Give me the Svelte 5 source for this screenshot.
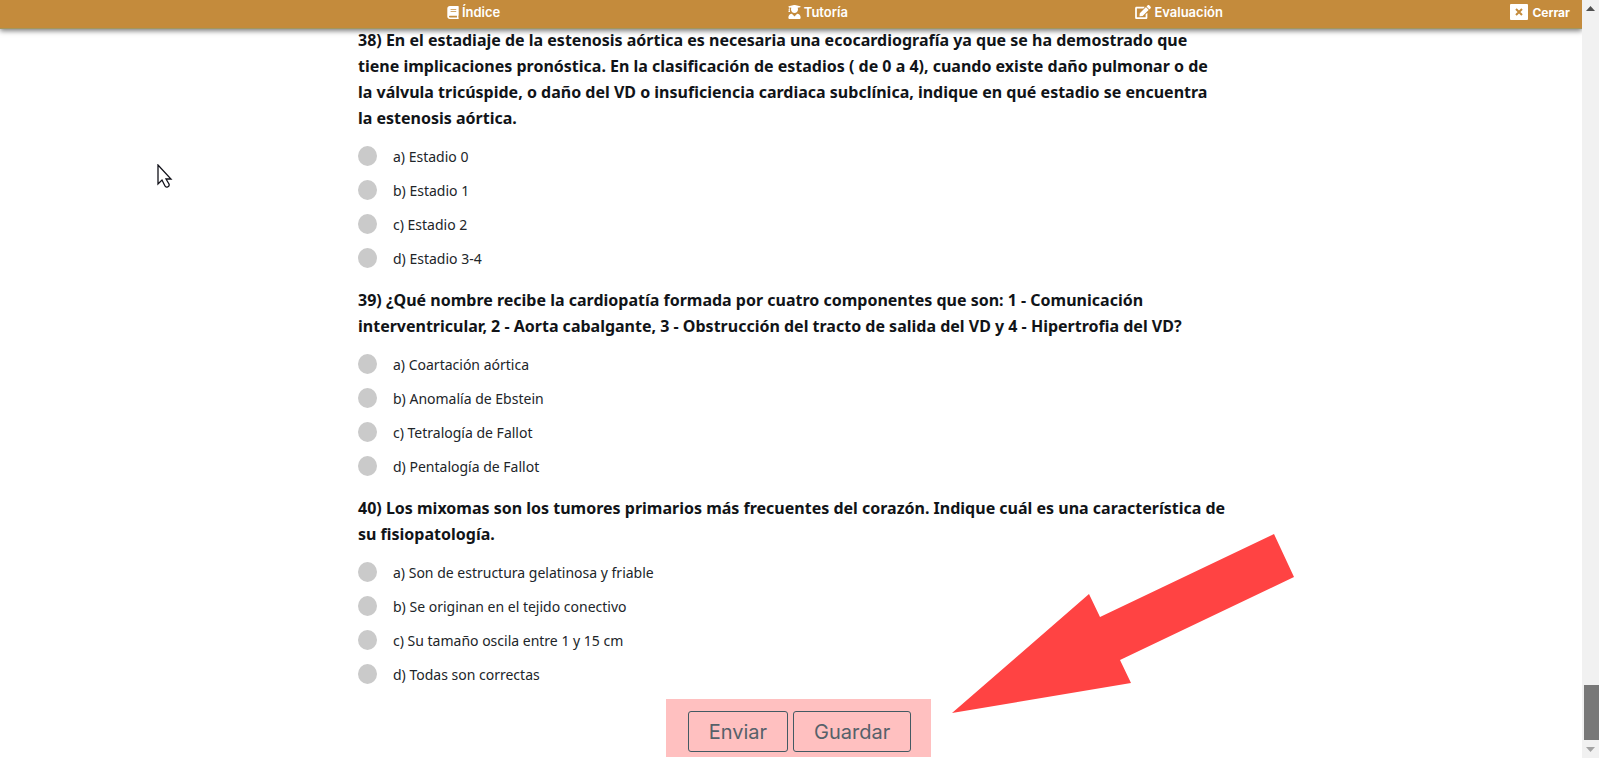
<script lang="ts">
	interface Question {
		id: number;
		text: string;
		options: string[];
	}

	const questions: Question[] = [
		{
			id: 38,
			text: 'En el estadiaje de la estenosis aórtica es necesaria una ecocardiografía ya que se ha demostrado que\ntiene implicaciones pronóstica. En la clasificación de estadios ( de 0 a 4), cuando existe daño pulmonar o de\nla válvula tricúspide, o daño del VD o insuficiencia cardiaca subclínica, indique en qué estadio se encuentra\nla estenosis aórtica.',
			options: ['Estadio 0', 'Estadio 1', 'Estadio 2', 'Estadio 3-4']
		},
		{
			id: 39,
			text: '¿Qué nombre recibe la cardiopatía formada por cuatro componentes que son: 1 - Comunicación\ninterventricular, 2 - Aorta cabalgante, 3 - Obstrucción del tracto de salida del VD y 4 - Hipertrofia del VD?',
			options: ['Coartación aórtica', 'Anomalía de Ebstein', 'Tetralogía de Fallot', 'Pentalogía de Fallot']
		},
		{
			id: 40,
			text: 'Los mixomas son los tumores primarios más frecuentes del corazón. Indique cuál es una característica de\nsu fisiopatología.',
			options: [
				'Son de estructura gelatinosa y friable',
				'Se originan en el tejido conectivo',
				'Su tamaño oscila entre 1 y 15 cm',
				'Todas son correctas'
			]
		}
	];

	let answers: Record<number, string | undefined> = $state({});
</script>

<div class="page">
	<div class="content">
		<nav class="topbar">
			<a href="#indice">
				<svg width="12" height="13" viewBox="0 0 448 512" fill="currentColor" aria-hidden="true">
					<path d="M448 360V24c0-13.300-10.700-24-24-24H96C43 0 0 43 0 96v320c0 53 43 96 96 96h328c13.300 0 24-10.700 24-24v-16c0-7.500-3.500-14.300-8.900-18.700-4.200-15.400-4.200-59.300 0-74.700 5.400-4.300 8.900-11.100 8.900-18.600zM128 134c0-3.300 2.700-6 6-6h212c3.300 0 6 2.700 6 6v20c0 3.300-2.700 6-6 6H134c-3.300 0-6-2.700-6-6v-20zm0 64c0-3.300 2.700-6 6-6h212c3.300 0 6 2.700 6 6v20c0 3.300-2.700 6-6 6H134c-3.300 0-6-2.700-6-6v-20zm253.400 250H96c-17.700 0-32-14.300-32-32 0-17.600 14.400-32 32-32h285.400c-1.900 17.100-1.900 46.900 0 64z" />
				</svg>
				<span>Índice</span>
			</a>
			<a href="#tutoria">
				<svg width="13" height="14" viewBox="0 0 448 512" fill="currentColor" aria-hidden="true">
					<path d="M319.400 320.600 224 416l-95.400-95.400C57.100 323.700 0 382.200 0 454.400v9.600c0 26.500 21.500 48 48 48h352c26.500 0 48-21.500 48-48v-9.600c0-72.200-57.100-130.700-128.600-133.800zM13.600 79.800l6.400 1.500v58.400c-7 4.200-12 11.500-12 20.300 0 8.400 4.600 15.400 11.100 19.700L3.500 242c-1.700 6.900 2.100 14 7.600 14h41.800c5.500 0 9.300-7.100 7.600-14l-15.600-62.300C51.400 175.400 56 168.400 56 160c0-8.800-5-16.100-12-20.300V87.100l66 15.900c-8.600 17.200-14 36.400-14 57 0 70.700 57.300 128 128 128s128-57.300 128-128c0-20.600-5.300-39.800-14-57l96.300-23.200c18.200-4.400 18.200-27.100 0-31.500l-190.400-46c-13-3.100-26.700-3.100-39.700 0L13.600 48.200c-18.100 4.400-18.100 27.200 0 31.600z" />
				</svg>
				<span>Tutoría</span>
			</a>
			<a href="#evaluacion">
				<svg width="16" height="14" viewBox="0 0 576 512" fill="currentColor" aria-hidden="true">
					<path d="M402.600 83.200l90.200 90.200c3.800 3.800 3.800 10 0 13.800L274.400 405.600l-92.800 10.300c-12.400 1.400-22.900-9.100-21.500-21.500l10.300-92.800L388.800 83.200c3.800-3.800 10-3.800 13.800 0zm162-22.900-48.800-48.800c-15.200-15.200-39.900-15.200-55.200 0l-35.400 35.400c-3.800 3.800-3.800 10 0 13.800l90.200 90.200c3.800 3.800 10 3.800 13.800 0l35.400-35.400c15.200-15.300 15.200-40 0-55.200zM384 346.200V448H64V128h229.800c3.200 0 6.200-1.300 8.500-3.500l40-40c7.600-7.600 2.200-20.500-8.500-20.500H48C21.500 64 0 85.500 0 112v352c0 26.500 21.500 48 48 48h352c26.500 0 48-21.500 48-48V306.200c0-10.700-12.900-16-20.500-8.500l-40 40c-2.200 2.300-3.500 5.300-3.500 8.500z" />
				</svg>
				<span>Evaluación</span>
			</a>
			<a class="close" href="#cerrar">
				<svg width="18" height="16" viewBox="0 0 18 16" aria-hidden="true">
					<rect width="18" height="16" rx="1" fill="#fff" />
					<path d="M6 5l6 6M12 5l-6 6" stroke="#c48b3c" stroke-width="2" />
				</svg>
				<span>Cerrar</span>
			</a>
		</nav>

		<main>
			{#each questions as q (q.id)}
				<fieldset>
					<legend>{q.id}) {q.text}</legend>
					{#each q.options as option, i (option)}
						<label>
							<input type="radio" name="q{q.id}" value={option} bind:group={answers[q.id]} />
							<span>{'abcd'[i]}) {option}</span>
						</label>
					{/each}
				</fieldset>
			{/each}

			<div class="actions">
				<button type="button">Enviar</button>
				<button type="button">Guardar</button>
				<svg class="arrow" width="342" height="179" viewBox="0 0 342 179" aria-hidden="true">
					<path d="M0 179 137 60 148 83 322 0 342 43 168 126 179 149z" fill="#ff4343" />
				</svg>
			</div>
		</main>
	</div>

	<div class="scrollbar" aria-hidden="true">
		<svg width="17" height="17" viewBox="0 0 17 17"><path d="M4 11l4.500-5 4.500 5z" fill="#505050" /></svg>
		<div class="thumb"></div>
		<svg width="17" height="17" viewBox="0 0 17 17"><path d="M4 6h9l-4.500 5z" fill="#a3a3a3" /></svg>
	</div>

	<svg class="cursor" width="16" height="25" viewBox="0 0 16 25" aria-hidden="true">
		<path d="M1 1v19l4-4 3 6c1 2 5 1 4-2l-3-5h5z" fill="#fff" stroke="#111119" stroke-width="1.300" />
	</svg>
</div>

<style>
	:global(body) {
		margin: 0;
		background: #fff;
	}

	.page {
		position: relative;
		display: flex;
		min-height: 100vh;
		font-family: 'Noto Sans', 'Open Sans', sans-serif;
		color: #212529;
	}

	.content {
		flex: 1;
		min-width: 0;
	}

	.topbar {
		display: flex;
		justify-content: space-between;
		align-items: center;
		box-sizing: border-box;
		height: 29px;
		padding: 0 12px 4px calc(28% + 4px);
		background: #c48b3c;
		border-bottom: 1px solid #a3965f;
		box-shadow: 0 2px 5px rgba(0, 0, 0, 0.5);
		font-family: Inter, sans-serif;
		font-size: 13px;
		font-weight: 600;
	}

	.topbar a {
		display: flex;
		align-items: center;
		gap: 3px;
		color: #fff;
		text-decoration: none;
	}

	.topbar .close {
		gap: 4px;
		font-size: 12px;
		font-weight: 700;
	}

	main {
		display: flex;
		flex-direction: column;
		max-width: 881px;
		margin: -2px auto 0;
		padding-left: 15px;
	}

	fieldset {
		min-width: 0;
		margin: 0 0 12px;
		padding: 0;
		border: 0;
	}

	legend {
		padding: 0;
		margin-bottom: 8px;
		font-size: 16px;
		font-weight: 700;
		line-height: 26px;
		white-space: pre-line;
		color: #111418;
	}

	label {
		display: flex;
		align-items: center;
		gap: 16px;
		height: 34px;
		font-size: 14px;
	}

	input {
		appearance: none;
		width: 19px;
		height: 20px;
		margin: 0;
		border-radius: 50%;
		background: #cacaca;
	}

	input:checked {
		background: #c48b3c;
	}

	.actions {
		position: relative;
		display: flex;
		align-self: center;
		gap: 5px;
		margin-top: -4px;
		padding: 12px 20px 5px 22px;
		background: #ffc0c0;
	}

	button {
		height: 41px;
		padding: 0 20px;
		border: 1px solid #435a63;
		border-radius: 3px;
		background: transparent;
		font-family: Inter, sans-serif;
		font-size: 20px;
		color: #56616a;
	}

	.arrow {
		position: absolute;
		left: calc(100% + 21px);
		bottom: 44px;
	}

	.scrollbar {
		display: flex;
		flex-direction: column;
		width: 17px;
		background: #f1f1f1;
	}

	.thumb {
		height: 55px;
		margin: auto 0 1px 2px;
		background: #787878;
	}

	.cursor {
		position: absolute;
		left: 157px;
		top: 164px;
	}
</style>
